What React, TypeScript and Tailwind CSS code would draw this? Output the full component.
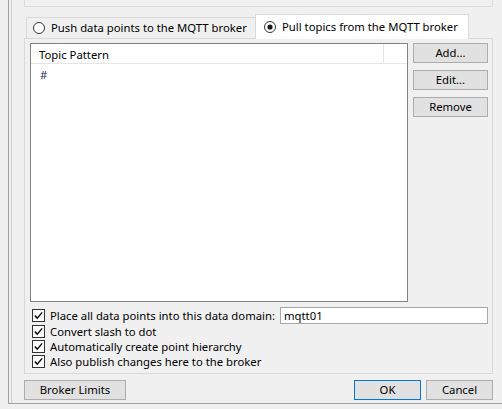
import React from 'react'

function Radio({ checked }: { checked?: boolean }) {
  return (
    <svg width="12" height="12" viewBox="0 0 12 12" className="shrink-0">
      <circle cx="6" cy="6" r="5.5" fill="#fff" stroke="#333" />
      {checked && <circle cx="6" cy="6" r="2.6" fill="#1a1a1a" />}
    </svg>
  )
}

function Check() {
  return (
    <svg width="13" height="13" viewBox="0 0 13 13" className="shrink-0">
      <rect x="0.5" y="0.5" width="12" height="12" fill="#fff" stroke="#333" />
      <path d="M2.8 6.6 L5.2 9.1 L10.2 3.4" fill="none" stroke="#000" strokeWidth="1.4" />
    </svg>
  )
}

function Button({ label, className = '' }: { label: string; className?: string }) {
  return (
    <div
      className={`h-[20px] flex items-center justify-center bg-[#e1e1e1] border border-[#adadad] ${className}`}
    >
      {label}
    </div>
  )
}

export default function App() {
  const options = [
    'Convert slash to dot',
    'Automatically create point hierarchy',
    'Also publish changes here to the broker',
  ]

  return (
    <div className="w-[502px] h-[409px] bg-[#f0f0f0] overflow-hidden text-[11.3px] leading-none whitespace-nowrap text-black font-['Segoe_UI','Noto_Sans',sans-serif]">
      <div className="ml-[8px] h-[404px] border-l border-b border-[#a0a0a0] pl-[2px] bg-[#f0f0f0]">
        <div className="h-full border-l border-[#cfcfcf] pl-[12px]">
          <div className="w-[469px]">
            {/* previous group */}
            <div className="h-[7px] border-x border-b border-[#dcdcdc]" />

            {/* tabs */}
            <div className="mt-[7px] h-[24px] flex items-end pl-[2px]">
              <div className="w-[229px] h-[21px] border-t border-l border-[#d9d9d9] bg-[#f0f0f0] flex items-center gap-[6px] pl-[6px]">
                <Radio />
                <span>Push data points to the MQTT broker</span>
              </div>
              <div className="relative z-10 -mb-px w-[214px] h-[25px] border-x border-t border-[#d9d9d9] bg-white flex items-center gap-[6px] pl-[8px] pb-[1px]">
                <Radio checked />
                <span>Pull topics from the MQTT broker</span>
              </div>
            </div>

            {/* tab page */}
            <div className="h-[336px] border border-[#d9d9d9] pl-[5px] pr-[4px] pt-[4px]">
              <div className="flex gap-[5px]">
                <div className="w-[378px] h-[259px] border border-[#828282] bg-white">
                  <div className="h-[20px] flex border-b border-[#e5e5e5]">
                    <div className="w-[353px] border-r border-[#e5e5e5] pl-[8px] pt-[3px] flex items-center">
                      Topic Pattern
                    </div>
                  </div>
                  <div className="h-[20px] pl-[9px] pt-[2px] flex items-center text-[#1c2f6b]">#</div>
                </div>
                <div className="w-[75px] flex flex-col gap-[7px]">
                  <Button label="Add..." />
                  <Button label="Edit..." />
                  <Button label="Remove" />
                </div>
              </div>

              <div className="mt-[5px] pl-[2px]">
                <div className="h-[17px] flex items-center">
                  <Check />
                  <span className="ml-[5px]">Place all data points into this data domain:</span>
                  <div className="ml-auto w-[208px] h-[17px] border border-[#a8a8a8] bg-white flex items-center pl-[3px]">
                    mqtt01
                  </div>
                </div>
                {options.map((o) => (
                  <div key={o} className="h-[15px] flex items-center">
                    <Check />
                    <span className="ml-[5px]">{o}</span>
                  </div>
                ))}
              </div>
            </div>

            {/* dialog buttons */}
            <div className="mt-[6px] flex items-center">
              <Button label="Broker Limits" className="w-[102px]" />
              <Button label="OK" className="ml-auto w-[67px] !border-[#0078d7]" />
              <Button label="Cancel" className="ml-[5px] w-[67px]" />
            </div>
          </div>
        </div>
      </div>
    </div>
  )
}
